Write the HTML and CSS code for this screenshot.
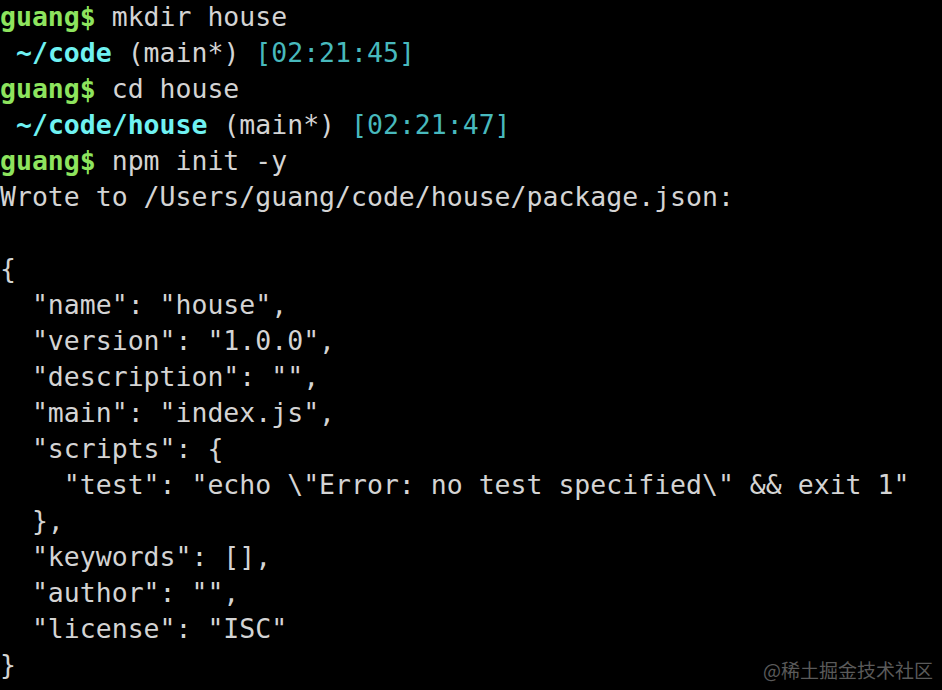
FILE: index.html
```html
<!DOCTYPE html>
<html>
<head>
<meta charset="utf-8">
<link rel="stylesheet" href="styles.css">
</head>
<body>
<div class="term">
<div class="line"><span class="user">guang$</span> mkdir house</div>
<div class="line"> <span class="path">~/code</span> (main*) <span class="time">[02:21:45]</span></div>
<div class="line"><span class="user">guang$</span> cd house</div>
<div class="line"> <span class="path">~/code/house</span> (main*) <span class="time">[02:21:47]</span></div>
<div class="line"><span class="user">guang$</span> npm init -y</div>
<div class="line">Wrote to /Users/guang/code/house/package.json:</div>
<div class="line"> </div>
<div class="line">{</div>
<div class="line">  "name": "house",</div>
<div class="line">  "version": "1.0.0",</div>
<div class="line">  "description": "",</div>
<div class="line">  "main": "index.js",</div>
<div class="line">  "scripts": {</div>
<div class="line">    "test": "echo \"Error: no test specified\" &amp;&amp; exit 1"</div>
<div class="line">  },</div>
<div class="line">  "keywords": [],</div>
<div class="line">  "author": "",</div>
<div class="line">  "license": "ISC"</div>
<div class="line">}</div>
</div>
<div class="mark">@稀土掘金技术社区</div>
</body>
</html>
```
FILE: styles.css
```css
html, body {
  margin: 0;
  padding: 0;
  background: #000;
  width: 942px;
  height: 690px;
  overflow: hidden;
}
.term {
  font-family: "DejaVu Sans Mono", "Liberation Mono", monospace;
  font-size: 26.5px;
  line-height: 36px;
  color: #d4d4d4;
  margin-top: -1px;
}
.line {
  height: 36px;
  white-space: pre;
}
.user {
  color: #8ee45e;
  font-weight: bold;
}
.path {
  color: #6ff2f2;
  font-weight: bold;
}
.time {
  color: #48b9bd;
}
.mark {
  position: absolute;
  right: 9px;
  top: 657px;
  font-family: "Noto Sans CJK SC", sans-serif;
  font-size: 19px;
  line-height: 26px;
  color: #5a5a5a;
}
```
